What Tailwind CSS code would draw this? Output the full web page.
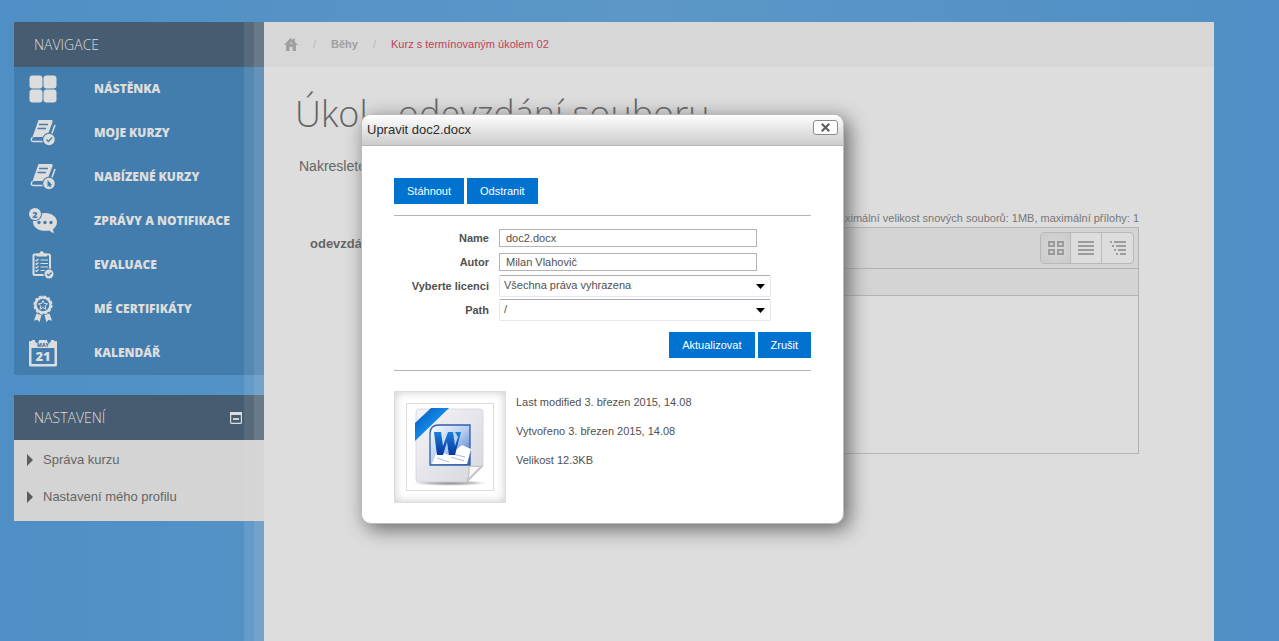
<!DOCTYPE html>
<html lang="cs">
<head>
<meta charset="utf-8">
<meta name="viewport" content="width=device-width, initial-scale=1">
<title>Kurz s termínovaným úkolem 02</title>
<script src="https://cdn.jsdelivr.net/npm/@tailwindcss/browser@4"></script>
</head>
<body class="relative h-screen overflow-hidden bg-linear-to-r from-[#4f8fc5] via-[#5c97c8] to-[#4f8fc5] font-['Liberation_Sans',Arial,sans-serif] text-[#646464]">
<div class="flex h-full pt-[22px] pr-[65px] pl-[14px]">

  <aside class="flex w-[250px] shrink-0 flex-col gap-5">
    <nav aria-labelledby="nav-title" class="bg-[#437dad]">
      <h2 id="nav-title" class="flex h-[45px] items-center bg-[#465c70] px-5 font-['Open_Sans',sans-serif] text-sm font-light text-[#dddddd]">NAVIGACE</h2>
      <ul class="font-['Open_Sans',sans-serif] text-xs font-extrabold text-[#dddddd]">
        <li><a href="#" class="flex h-11 items-center gap-9 pl-[14px]">
          <svg class="size-[30px]" viewBox="0 0 30 30" fill="currentColor"><rect x="1.500" y="1.500" width="13" height="13" rx="3"/><rect x="15.500" y="1.500" width="13" height="13" rx="3"/><rect x="1.500" y="15.500" width="13" height="13" rx="3"/><rect x="15.500" y="15.500" width="13" height="13" rx="3"/></svg>NÁSTĚNKA</a></li>
        <li><a href="#" class="flex h-11 items-center gap-9 pl-[14px]">
          <svg class="size-[30px]" viewBox="0 0 30 30" fill="none"><path d="M10.500 2H23q2.200 0 1.500 2L19 19H6.500q-1.500 0-2.500 1.500Z" fill="currentColor"/><path d="M4 19.500q-2 4 1.500 4H21L27 7" stroke="currentColor" stroke-width="1.500"/><path d="M11 6.500h9M9.500 10.500h8.500" stroke="#437dad" stroke-width="1.400"/><circle cx="21" cy="21.500" r="6.800" fill="#437dad"/><circle cx="21" cy="21.500" r="5.700" fill="currentColor"/><path d="m18.500 21.500 2 2 3.500-4" stroke="#437dad" stroke-width="1.400"/></svg>MOJE KURZY</a></li>
        <li><a href="#" class="flex h-11 items-center gap-9 pl-[14px]">
          <svg class="size-[30px]" viewBox="0 0 30 30" fill="none"><path d="M10.500 2H23q2.200 0 1.500 2L19 19H6.500q-1.500 0-2.500 1.500Z" fill="currentColor"/><path d="M4 19.500q-2 4 1.500 4H21L27 7" stroke="currentColor" stroke-width="1.500"/><path d="M11 6.500h9M9.500 10.500h8.500" stroke="#437dad" stroke-width="1.400"/><circle cx="21" cy="21.500" r="6.800" fill="#437dad"/><circle cx="21" cy="21.500" r="5.700" fill="currentColor"/><path d="M19.500 18v7l1.500-1.200 1 1.800 1.200-.6-.8-1.800h2Z" fill="#437dad"/></svg>NABÍZENÉ KURZY</a></li>
        <li><a href="#" class="flex h-11 items-center gap-9 pl-[14px]">
          <svg class="size-[30px]" viewBox="0 0 30 30" fill="currentColor"><path d="M17 7c7 0 12 4 12 9 0 3-1.500 5.500-4 7l.8 4.500-4.800-3c-9 1.500-16-2.500-16-8.500 0-5 5-9 12-9Z"/><circle cx="7" cy="8" r="7" fill="#437dad"/><circle cx="7" cy="8" r="6"/><text x="7" y="11.500" text-anchor="middle" font-size="9" font-weight="800" fill="#437dad">2</text><g fill="#437dad"><circle cx="11" cy="16.500" r="1.700"/><circle cx="17" cy="16.500" r="1.700"/><circle cx="23" cy="16.500" r="1.700"/></g></svg>ZPRÁVY A NOTIFIKACE</a></li>
        <li><a href="#" class="flex h-11 items-center gap-9 pl-[14px]">
          <svg class="size-[30px]" viewBox="0 0 30 30" fill="none"><rect x="5.500" y="4.500" width="16.500" height="20.500" rx="1" stroke="currentColor" stroke-width="2"/><path d="M8.500 6.500v-3h3Q12 1 13.700 1T16 3.500h3v3Z" fill="currentColor"/><path d="m7.500 10 1 1 2-2m-3 4.500 1 1 2-2m-3 4.500 1 1 2-2m-3 4.500 1 1 2-2M12.500 10H20m-7.500 3.500H20M12.500 17H20m-7.500 3.500H17" stroke="currentColor" stroke-width="1.100"/><circle cx="21" cy="24" r="5.500" fill="#437dad"/><circle cx="21" cy="24" r="4.500" fill="currentColor"/><path d="m19 24 1.500 1.500 3-3" stroke="#437dad" stroke-width="1.300"/></svg>EVALUACE</a></li>
        <li><a href="#" class="flex h-11 items-center gap-9 pl-[14px]">
          <svg class="size-[30px]" viewBox="0 0 30 30" fill="none"><circle cx="15" cy="11" r="7.500" stroke="currentColor" stroke-width="2.500"/><circle cx="15" cy="11" r="8.900" stroke="currentColor" stroke-width="1.400" stroke-dasharray="3 1.660"/><path d="m15 6.500 1.300 3 3.300.3-2.500 2.200.8 3.200-2.900-1.700-2.900 1.700.8-3.200-2.500-2.200 3.300-.3Z" stroke="currentColor"/><path d="m8.500 19.500 5 1.800-2 7-2-2.500-3.500 1ZM21.500 19.500l-5 1.800 2 7 2-2.500 3.500 1Z" fill="currentColor"/></svg>MÉ CERTIFIKÁTY</a></li>
        <li><a href="#" class="flex h-11 items-center gap-9 pl-[14px]">
          <svg class="size-[30px]" viewBox="0 0 30 30" fill="currentColor"><path d="M1 3q2 1 3.500-1H7q0 3 2 3t2-3h8q0 3 2 3t2-3h2.500Q27 4 29 3v24q0 1.500-1.500 1.500h-25Q1 28.500 1 27Z"/><path d="M3.500 10h23v16h-23Z" fill="#437dad"/><text x="15" y="8.800" text-anchor="middle" font-size="5" font-weight="800" fill="#437dad">MAY</text><text x="15" y="23" text-anchor="middle" font-size="13" font-weight="800">21</text></svg>KALENDÁŘ</a></li>
      </ul>
    </nav>

    <section aria-labelledby="set-title" class="bg-[#d4d4d4]">
      <div class="flex h-[45px] items-center justify-between bg-[#465c70] pr-[22px] pl-5 text-[#dddddd]">
        <h2 id="set-title" class="font-['Open_Sans',sans-serif] text-sm font-light">NASTAVENÍ</h2>
        <button type="button" aria-label="Sbalit blok Nastavení"><svg class="size-3" viewBox="0 0 12 12" fill="none"><rect x=".6" y=".6" width="10.800" height="10.800" rx="1" stroke="currentColor" stroke-width="1.200"/><path d="M0 1.500h12" stroke="currentColor" stroke-width="3"/><path d="M3 7h6" stroke="currentColor" stroke-width="1.800"/></svg></button>
      </div>
      <ul class="pt-[1px] pb-[6px] text-[13px]">
        <li><a href="#" class="flex h-[37px] items-center gap-[10px] pl-[13px]"><svg class="h-3 w-[6px]" viewBox="0 0 6 12" fill="#5c5c5c"><path d="m0 0 6 6-6 6Z"/></svg>Správa kurzu</a></li>
        <li><a href="#" class="flex h-[37px] items-center gap-[10px] pl-[13px]"><svg class="h-3 w-[6px]" viewBox="0 0 6 12" fill="#5c5c5c"><path d="m0 0 6 6-6 6Z"/></svg>Nastavení mého profilu</a></li>
      </ul>
    </section>
  </aside>

  <main class="relative min-w-0 flex-1 bg-[#dddddd] shadow-[-10px_0_0_rgba(221,221,221,0.12),-20px_0_0_rgba(221,221,221,0.12)]">
    <nav aria-label="Drobečková navigace" class="flex h-[45px] items-center bg-[#d7d7d7] pl-5 text-[11px]">
      <a href="#" aria-label="Domů"><svg class="h-[13px] w-[14px]" viewBox="0 0 14 13" fill="#a0a0a0"><path d="M6.500 0 9 2V.8h2V4l3 3h-2v6H8.500V9h-3v4H2V7H0Z"/><path d="M6.300 4.500h1.500v1.500H6.300Z" fill="#d7d7d7"/></svg></a>
      <span class="px-[15px] text-[#a9bccb]">/</span>
      <a href="#" class="font-bold text-[#a0a0a0]">Běhy</a>
      <span class="px-[15px] text-[#a9bccb]">/</span>
      <a href="#" class="text-[#c23f5c]">Kurz s termínovaným úkolem 02</a>
    </nav>
    <div class="pr-[75px] pl-[31px]">
      <h1 class="pt-[22px] font-['Open_Sans',sans-serif] text-4xl leading-[50px] font-light">Úkol - odevzdání souboru</h1>
      <p class="pt-[17px] pl-1 text-sm leading-5">Nakreslete</p>
      <div class="flex gap-[38px] pt-[34px] pl-[15px]">
        <div class="pt-[26px] text-[13px] leading-4 font-bold">odevzdání</div>
        <div class="min-w-0 flex-1">
          <p class="pb-[1px] text-right text-[11px] leading-4 text-[#777]">Maximální velikost snových souborů: 1MB, maximální přílohy: 1</p>
          <div class="border border-[#b4b4b4]">
            <div class="flex h-[41px] items-center justify-end border-b border-[#b4b4b4] bg-[#d4d4d4] pr-1">
              <div class="flex divide-x divide-[#b8b8b8] rounded border border-[#b8b8b8] bg-[#dddddd] text-[#9c9c9c]">
                <button type="button" aria-label="Ikony" class="flex h-[30px] w-[30px] items-center justify-center rounded-l bg-radial from-[#d8d8d8] to-[#cacaca]"><svg class="h-[14px] w-4" viewBox="0 0 16 14" fill="none" stroke="currentColor" stroke-width="2"><path d="M1 1h5v4H1ZM10 1h5v4h-5ZM1 9h5v4H1ZM10 9h5v4h-5Z"/></svg></button>
                <button type="button" aria-label="Seznam" class="flex h-[30px] w-[31px] items-center justify-center"><svg class="h-[14px] w-4" viewBox="0 0 16 14" fill="none" stroke="currentColor" stroke-width="2"><path d="M0 1h16M0 5h16M0 9h16M0 13h16"/></svg></button>
                <button type="button" aria-label="Strom" class="flex h-[30px] w-[31px] items-center justify-center"><svg class="h-[14px] w-4" viewBox="0 0 16 14" fill="none" stroke="currentColor" stroke-width="2"><path d="M0 1h2M4 1h12M2 5h2M6 5h10M4 9h2M8 9h8M6 13h2M10 13h6"/></svg></button>
              </div>
            </div>
            <div class="h-[27px] border-b border-[#b4b4b4] bg-[#d4d4d4]"></div>
            <div class="h-[157px]"></div>
          </div>
        </div>
      </div>
    </div>
  </main>
</div>

<div role="dialog" aria-labelledby="dlg-title" class="absolute top-[114px] left-[361px] w-[483px] overflow-hidden rounded-[10px] border border-[#bbb] bg-white text-[11px] text-[#505050] shadow-[5px_5px_20px_#666]">
  <header class="flex h-[31px] items-start justify-between border-b border-[#b4b4b4] bg-linear-to-b from-white to-[#cccccc] pr-[5px] pl-[5px]">
    <h2 id="dlg-title" class="text-[13px] leading-[30px] text-[#2c2c2c]">Upravit doc2.docx</h2>
    <button type="button" aria-label="Zavřít" class="mt-[5px] flex h-[15px] w-[25px] items-center justify-center rounded-[3px] border border-[#8c8c8c] bg-white"><svg class="size-[9px]" viewBox="0 0 9 9" fill="none" stroke="#606060" stroke-width="2.200"><path d="m.8.8 7.400 7.400M8.200.8.8 8.200"/></svg></button>
  </header>
  <form class="px-8 pt-8 pb-5">
    <div class="flex gap-[3px] border-b border-[#b4b4b4] pb-[11px]">
      <button type="button" class="h-[26px] bg-[#0073d1] px-[13px] text-white">Stáhnout</button>
      <button type="button" class="h-[26px] bg-[#0073d1] px-[13px] text-white">Odstranit</button>
    </div>
    <div class="grid grid-cols-[95px_1fr] items-center gap-x-[10px] gap-y-[2px] pt-[11px]">
      <label for="f-name" class="text-right font-bold">Name</label>
      <div class="flex h-[22px] items-center"><input id="f-name" type="text" value="doc2.docx" class="h-[18px] w-[258px] border border-[#b4b4b4] px-[6px] leading-4"></div>
      <label for="f-author" class="text-right font-bold">Autor</label>
      <div class="flex h-[22px] items-center"><input id="f-author" type="text" value="Milan Vlahovič" class="h-[18px] w-[258px] border border-[#b4b4b4] px-[6px] leading-4"></div>
      <label for="f-lic" class="text-right font-bold">Vyberte licenci</label>
      <div class="relative w-[272px]"><select id="f-lic" class="block h-[22px] w-full appearance-none rounded-[2px] border border-[#e3e9ef] border-t-[#abadb3] bg-white pr-6 pb-[1px] pl-1"><option>Všechna práva vyhrazena</option></select><svg class="pointer-events-none absolute top-[9px] right-[6px] h-[5px] w-[9px]" viewBox="0 0 9 5"><path d="M0 0h9L4.500 5Z"/></svg></div>
      <label for="f-path" class="text-right font-bold">Path</label>
      <div class="relative w-[272px]"><select id="f-path" class="block h-[22px] w-full appearance-none rounded-[2px] border border-[#e3e9ef] border-t-[#abadb3] bg-white pr-6 pb-[1px] pl-1"><option>/</option></select><svg class="pointer-events-none absolute top-[9px] right-[6px] h-[5px] w-[9px]" viewBox="0 0 9 5"><path d="M0 0h9L4.500 5Z"/></svg></div>
    </div>
    <div class="flex justify-end gap-[3px] border-b border-[#b4b4b4] pt-[11px] pb-3">
      <button type="submit" class="h-[26px] bg-[#0073d1] px-[13px] text-white">Aktualizovat</button>
      <button type="button" class="h-[26px] bg-[#0073d1] px-[13px] text-white">Zrušit</button>
    </div>
    <div class="flex gap-[10px] pt-5">
      <div class="flex size-28 items-center justify-center border border-[#ddd] bg-white inset-shadow-[0_0_10px_#ccc]">
        <div class="flex size-[88px] items-center justify-center border border-[#ddd] bg-white">
          <svg class="size-[86px]" viewBox="0 0 86 86" role="img" aria-label="Dokument Word">
            <defs>
              <linearGradient id="pg" x1="0" y1="0" x2="1" y2="1"><stop offset="0" stop-color="#f4f4f8"/><stop offset="1" stop-color="#d6d6de"/></linearGradient>
              <linearGradient id="rb" x1="0" y1="0" x2="1" y2="1"><stop offset="0" stop-color="#0a55b4"/><stop offset=".5" stop-color="#1188e8"/><stop offset="1" stop-color="#0a5cc0"/></linearGradient>
              <linearGradient id="tl" x1="0" y1="0" x2="1" y2="1"><stop offset="0" stop-color="#fff"/><stop offset=".5" stop-color="#b5cdf0"/><stop offset="1" stop-color="#3568bd"/></linearGradient>
              <linearGradient id="wl" x1="0" y1="0" x2="0" y2="1"><stop offset="0" stop-color="#1c7fda"/><stop offset="1" stop-color="#0836a0"/></linearGradient>
              <radialGradient id="sh"><stop offset="0" stop-color="#888"/><stop offset=".6" stop-color="#aaa" stop-opacity=".7"/><stop offset="1" stop-color="#ccc" stop-opacity="0"/></radialGradient>
            </defs>
            <ellipse cx="43" cy="79" rx="38" ry="3" fill="url(#sh)"/>
            <path d="M12 5h61q3 0 3 3v54L60 78H12q-3 0-3-3V8q0-3 3-3Z" fill="url(#pg)" stroke="#cfcfd6" stroke-width=".7"/>
            <path d="M76 62q-5 1-14 0 1 8-2 16Z" fill="#fafafa" stroke="#aaaab0" stroke-width=".7"/>
            <path d="M61 76 74 63" stroke="#c4c4ca" stroke-width="2"/>
            <path d="M24 4h18L8 37V19Z" fill="url(#rb)"/>
            <path d="M32 21h31v40H23V30q0-9 9-9Z" fill="url(#tl)" stroke="#2f5fa6" stroke-width="1.300"/>
            <path d="m30 47 12 4 13-10 9 4-4 15H25Z" fill="#fff"/>
            <path d="m46 50 12 3m-14 0 13 4M30 54l12 4" stroke="#9bb6df" stroke-width=".9"/>
            <path d="M27 28h7l2 14 5-14h5l2 14 3-9-3-5h6l-6 23h-6l-2-13-4 13h-6Z" fill="url(#wl)"/>
          </svg>
        </div>
      </div>
      <div class="flex flex-col gap-[13px] pt-[3px] leading-4">
        <p>Last modified 3. březen 2015, 14.08</p>
        <p>Vytvořeno 3. březen 2015, 14.08</p>
        <p>Velikost 12.3KB</p>
      </div>
    </div>
  </form>
</div>
</body>
</html>
